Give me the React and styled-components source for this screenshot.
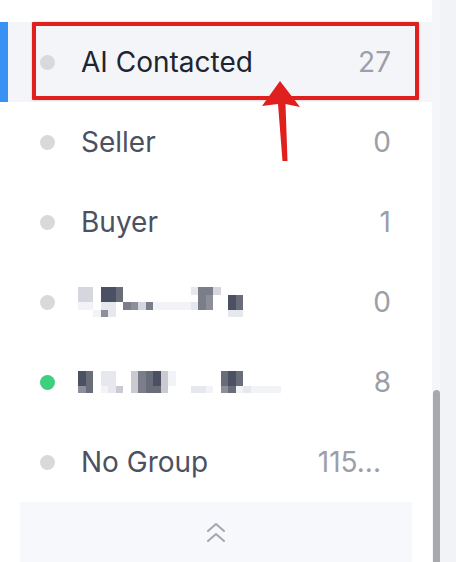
import styled, { createGlobalStyle } from "styled-components";

const GlobalStyle = createGlobalStyle`
  html, body {
    margin: 0;
    padding: 0;
    background: #ffffff;
    overflow: hidden;
  }
  body {
    font-family: "Inter", "Liberation Sans", "Noto Sans", sans-serif;
  }
`;

// pixelated (redacted) names, one char per 7.5px cell
const palette = {
  a: "#4b5162",
  b: "#696d79",
  c: "#7b7e89",
  d: "#8c8f99",
  e: "#c9cad2",
  f: "#d6d7de",
  g: "#e7e8ed",
  h: "#f2f3f6",
};

const mosaicA = [
  "ff.aab.........gccf....",
  "ff.aab..........cd..ab.",
  "hh.gg.cdfchhhhhgcd..ab.",
  "..hdg...............gg.",
];

const mosaicB = [
  "ab.gg..ecbaeh......bab......",
  "ab.gg..ecbaeh......bab......",
  "db.hge.ecbbe...ggh.dbhghhhh.",
];

const groups = [
  { label: "AI Contacted", count: "27", active: true },
  { label: "Seller", count: "0" },
  { label: "Buyer", count: "1" },
  { mosaic: mosaicA, count: "0" },
  { mosaic: mosaicB, count: "8", online: true },
  { label: "No Group", count: "115...", inset: 10 },
];

const Page = styled.div`
  position: relative;
  display: flex;
  width: 456px;
  height: 562px;
  overflow: hidden;
`;

const Panel = styled.div`
  width: 432px;
  background: #ffffff;
  padding-top: 22px;
  display: flex;
  flex-direction: column;
`;

const Row = styled.div`
  position: relative;
  display: flex;
  align-items: center;
  height: 80px;
  flex-shrink: 0;
  padding: 0 41px 0 40px;
  background: ${({ $active }) => ($active ? "#f4f5f9" : "transparent")};

  &::before {
    content: "";
    display: ${({ $active }) => ($active ? "block" : "none")};
    position: absolute;
    left: 0;
    top: 0;
    bottom: 0;
    width: 8px;
    background: #3a91f4;
  }
`;

const Dot = styled.span`
  width: 15px;
  height: 15px;
  border-radius: 50%;
  flex-shrink: 0;
  margin-right: 26px;
  background: ${({ $online }) => ($online ? "#3ecf7f" : "#d9d9dc")};
`;

const Label = styled.span`
  flex: 1;
  font-size: 28px;
  line-height: 1;
  color: ${({ $active }) => ($active ? "#20242f" : "#4c5161")};
  white-space: nowrap;
`;

const Count = styled.span`
  font-size: 28px;
  line-height: 1;
  color: #9c9ea8;
  margin-right: ${({ $inset }) => $inset || 0}px;
`;

const Mosaic = styled.div`
  flex: 1;
  display: grid;
  grid-template-columns: repeat(${({ $cols }) => $cols}, 7.5px);
  grid-auto-rows: 7.5px;
  margin-left: -3px;
`;

const Cell = styled.span`
  background: ${({ $c }) => $c || "transparent"};
`;

const Collapse = styled.div`
  margin: 0 20px;
  flex: 1;
  background: #f7f8fb;
  display: flex;
  justify-content: center;
  padding-top: 20px;
`;

const Track = styled.div`
  position: relative;
  width: 8px;
  background: #f5f6f9;
`;

const Thumb = styled.div`
  position: absolute;
  left: 1px;
  right: 0;
  top: 390px;
  bottom: -10px;
  border-radius: 4px;
  background: #a9a9ab;
`;

const Side = styled.div`
  flex: 1;
  background: #f2f3f7;
`;

const Highlight = styled.div`
  position: absolute;
  left: 32px;
  top: 22px;
  width: 387px;
  height: 78px;
  box-sizing: border-box;
  border: 4.5px solid #e01f1f;
  border-radius: 1px;
  box-shadow: 0 0 2px rgba(150, 0, 0, 0.3);
  pointer-events: none;
`;

const Pointer = styled.svg`
  position: absolute;
  left: 0;
  top: 0;
  pointer-events: none;
`;

function Redacted({ rows }) {
  const cols = rows[0].length;
  return (
    <Mosaic $cols={cols}>
      {rows.flatMap((line, r) =>
        line.split("").map((ch, i) => <Cell key={r + "-" + i} $c={palette[ch]} />)
      )}
    </Mosaic>
  );
}

function ChevronsUp() {
  return (
    <svg width="20" height="22" viewBox="0 0 20 22" fill="none">
      <polyline
        points="2,9 10,2 18,9"
        stroke="#a3a6b0"
        strokeWidth="2"
        strokeLinecap="round"
        strokeLinejoin="round"
      />
      <polyline
        points="2,19 10,12 18,19"
        stroke="#a3a6b0"
        strokeWidth="2"
        strokeLinecap="round"
        strokeLinejoin="round"
      />
    </svg>
  );
}

export default function App() {
  return (
    <>
      <GlobalStyle />
      <Page>
        <Panel>
          {groups.map((g, i) => (
            <Row key={i} $active={g.active}>
              <Dot $online={g.online} />
              {g.mosaic ? (
                <Redacted rows={g.mosaic} />
              ) : (
                <Label $active={g.active}>{g.label}</Label>
              )}
              <Count $inset={g.inset}>{g.count}</Count>
            </Row>
          ))}
          <Collapse>
            <ChevronsUp />
          </Collapse>
        </Panel>
        <Track>
          <Thumb />
        </Track>
        <Side />

        <Highlight />
        <Pointer width="456" height="562" viewBox="0 0 456 562">
          <polygon
            points="280,81 300,107 285.5,104 287.5,161 282.5,161 278,104 262,106"
            fill="#e01f1f"
          />
        </Pointer>
      </Page>
    </>
  );
}
